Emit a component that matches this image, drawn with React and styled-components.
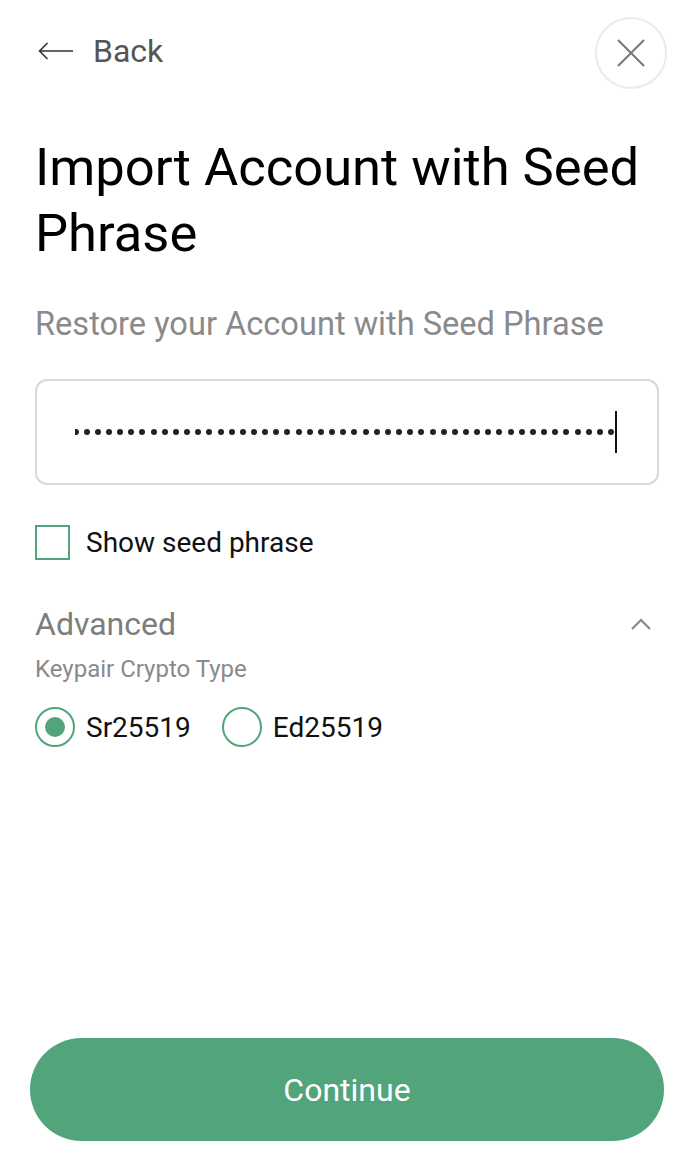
import React from "react";
import styled, { createGlobalStyle } from "styled-components";

const GlobalStyle = createGlobalStyle`
  html, body { margin: 0; padding: 0; background: #ffffff; }
  body { font-family: Roboto, "Noto Sans", "Liberation Sans", sans-serif; -webkit-font-smoothing: antialiased; }
  * { box-sizing: border-box; }
`;

const GREEN = "#52a47a";

const Page = styled.div`
  width: 698px;
  min-height: 1172px;
  display: flex;
  flex-direction: column;
  padding: 17px 30px 31px 35px;
`;

const Header = styled.div`
  height: 72px;
  display: flex;
  align-items: center;
  justify-content: space-between;
`;

const BackLink = styled.button`
  display: flex;
  align-items: center;
  gap: 19px;
  border: 0;
  background: none;
  padding: 0 0 0 3px;
  margin-top: -4px;
  font-family: inherit;
  font-size: 32px;
  color: #555555;
  cursor: pointer;
`;

const CloseButton = styled.button`
  width: 72px;
  height: 72px;
  border-radius: 50%;
  border: 2px solid #ebebeb;
  background: #fff;
  display: flex;
  align-items: center;
  justify-content: center;
  padding: 0;
  margin-right: 1px;
`;

const Title = styled.h1`
  margin: 45px 0 0;
  font-size: 52.5px;
  line-height: 66px;
  font-weight: 400;
  color: #000;
`;

const Subtitle = styled.p`
  margin: 40px 0 0;
  font-size: 32.6px;
  line-height: 36px;
  color: #8a8a8a;
`;

const Field = styled.div`
  margin: 37px 9px 0 0;
  height: 106px;
  border: 2px solid #d6d9d9;
  border-radius: 12px;
  display: flex;
  align-items: center;
  padding: 0 40px 0 38px;
`;

const Masked = styled.div`
  flex: 1;
  overflow: hidden;
  display: flex;
  justify-content: flex-end;
  align-items: center;
  height: 42px;
`;

const Dot = styled.span`
  flex: 0 0 auto;
  width: 6px;
  height: 6px;
  border-radius: 50%;
  background: #222;
  margin-left: 5.17px;
`;

const Caret = styled.span`
  flex: 0 0 auto;
  width: 2px;
  height: 42px;
  background: #111;
  margin-left: 1px;
`;

const CheckRow = styled.label`
  margin-top: 38px;
  display: flex;
  align-items: center;
  gap: 16px;
  font-size: 28px;
  color: #111;
  padding-top: 2px;
`;

const Box = styled.span`
  width: 35px;
  height: 35px;
  border: 2px solid ${GREEN};
  flex: 0 0 auto;
`;

const AdvancedRow = styled.div`
  margin-top: 48px;
  display: flex;
  align-items: center;
  justify-content: space-between;
  font-size: 32px;
  line-height: 32px;
  color: #7d7d7d;
  padding-right: 17px;
`;

const SectionLabel = styled.div`
  margin-top: 15px;
  font-size: 24px;
  line-height: 28px;
  color: #8a8a8a;
`;

const RadioGroup = styled.div`
  margin-top: 24px;
  display: flex;
  align-items: center;
  gap: 31px;
`;

const RadioOption = styled.label`
  display: flex;
  align-items: center;
  gap: 11px;
  font-size: 28px;
  color: #111;
`;

const RadioCircle = styled.span`
  width: 40px;
  height: 40px;
  border-radius: 50%;
  border: 2px solid ${GREEN};
  display: flex;
  align-items: center;
  justify-content: center;
  flex: 0 0 auto;
  &::after {
    content: "";
    width: 20px;
    height: 20px;
    border-radius: 50%;
    background: ${(p) => (p.$checked ? GREEN : "transparent")};
  }
`;

const Spacer = styled.div`
  flex: 1;
`;

const PrimaryButton = styled.button`
  margin: 0 4px 0 -5px;
  height: 103px;
  border: 0;
  border-radius: 52px;
  background: ${GREEN};
  color: #fff;
  font-family: inherit;
  font-size: 32px;
  cursor: pointer;
`;

export default function App() {
  const dots = Array.from({ length: 60 });
  return (
    <>
      <GlobalStyle />
      <Page>
        <Header>
          <BackLink>
            <svg width="36" height="18" viewBox="0 0 36 18" fill="none">
              <path d="M35 9H1.5M9.5 1L1.5 9l8 8" stroke="#333" strokeWidth="1.6" />
            </svg>
            Back
          </BackLink>
          <CloseButton aria-label="Close">
            <svg width="30" height="30" viewBox="0 0 30 30" fill="none">
              <path d="M2 2l26 26M28 2L2 28" stroke="#777" strokeWidth="2" />
            </svg>
          </CloseButton>
        </Header>
        <Title>Import Account with Seed Phrase</Title>
        <Subtitle>Restore your Account with Seed Phrase</Subtitle>
        <Field>
          <Masked>
            {dots.map((_, i) => (
              <Dot key={i} />
            ))}
            <Caret />
          </Masked>
        </Field>
        <CheckRow>
          <Box />
          Show seed phrase
        </CheckRow>
        <AdvancedRow>
          Advanced
          <svg width="20" height="12" viewBox="0 0 20 12" fill="none">
            <path d="M1 11l9-9 9 9" stroke="#888" strokeWidth="2.2" />
          </svg>
        </AdvancedRow>
        <SectionLabel>Keypair Crypto Type</SectionLabel>
        <RadioGroup>
          <RadioOption>
            <RadioCircle $checked />
            Sr25519
          </RadioOption>
          <RadioOption>
            <RadioCircle />
            Ed25519
          </RadioOption>
        </RadioGroup>
        <Spacer />
        <PrimaryButton>Continue</PrimaryButton>
      </Page>
    </>
  );
}
